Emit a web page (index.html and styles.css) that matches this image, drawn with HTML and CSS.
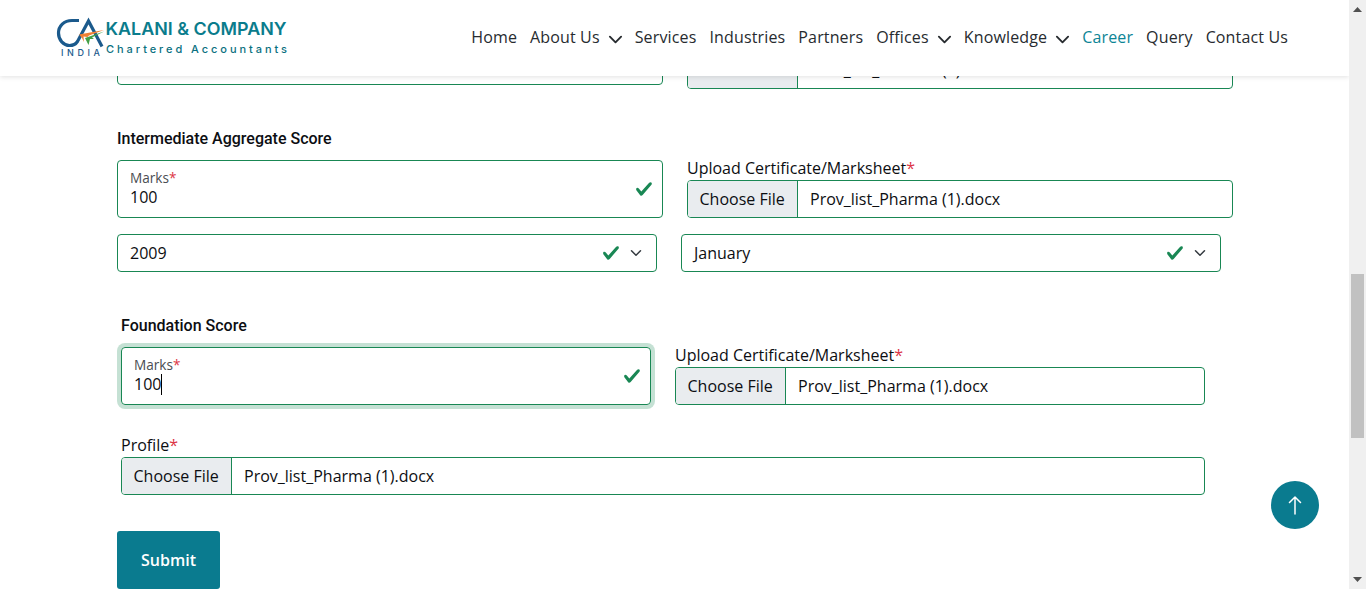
FILE: index.html
```html
<!DOCTYPE html>
<html lang="en">
<head>
<meta charset="utf-8">
<title>Career - Kalani &amp; Company</title>
<link rel="stylesheet" href="styles.css">
</head>
<body>
<svg class="defs" width="0" height="0" aria-hidden="true">
  <symbol id="check" viewBox="0 0 8 8"><path d="M2.3 6.73.6 4.53c-.4-1.04.46-1.4 1.1-.8l1.1 1.4 3.4-3.8c.6-.63 1.6-.27 1.2.7l-4 4.6c-.43.5-.8.4-1.1.1z" fill="#198754"/></symbol>
  <symbol id="caret" viewBox="0 0 16 16"><path d="m2 5 6 6 6-6" fill="none" stroke="currentColor" stroke-width="2" stroke-linecap="round" stroke-linejoin="round"/></symbol>
</svg>
<div class="page">
  <header class="header">
    <a class="logo">
      <svg width="240" height="46" viewBox="0 0 240 46">
        <g fill="none" stroke="#1b5a8c">
          <path d="M24 5.500H17C9 5.500 3.500 11 3.500 18s5 12.500 11 12.500c4 0 6-1 8-4L33.500 6l13.500 25.500" stroke-width="3.200"/>
        </g>
        <path d="M24 19.500 49 15 34 20.500l-1.500 1.500-4-.5.500 5.500-2-4z" fill="#f08034"/>
        <path d="M30 23 49 16.500 37 22.500l2 1.500-4 0-1.500 6z" fill="#43a047"/>
        <text class="logo-india" x="6" y="41" textLength="39">INDIA</text>
        <text class="logo-name" x="50.500" y="20" textLength="181" lengthAdjust="spacingAndGlyphs">KALANI &amp; COMPANY</text>
        <text class="logo-sub" x="51" y="38" textLength="181">Chartered Accountants</text>
      </svg>
    </a>
    <nav class="nav">
      <a>Home</a>
      <a>About Us<svg class="nav-caret"><use href="#caret"/></svg></a>
      <a>Services</a>
      <a>Industries</a>
      <a>Partners</a>
      <a>Offices<svg class="nav-caret"><use href="#caret"/></svg></a>
      <a>Knowledge<svg class="nav-caret"><use href="#caret"/></svg></a>
      <a class="active">Career</a>
      <a>Query</a>
      <a>Contact Us</a>
    </nav>
  </header>
  <main class="form">
    <div class="row previous">
      <div class="field"></div>
      <div class="upload">
        <div class="file"><span class="choose">Choose File</span><span class="name">Prov_list_Pharma (1).docx</span></div>
      </div>
    </div>
    <h2 class="title">Intermediate Aggregate Score</h2>
    <div class="row">
      <div class="field"><div><div class="small">Marks<i>*</i></div><div class="value">100</div></div><svg class="check"><use href="#check"/></svg></div>
      <div class="upload">
        <div class="label">Upload Certificate/Marksheet<i>*</i></div>
        <div class="file"><span class="choose">Choose File</span><span class="name">Prov_list_Pharma (1).docx</span></div>
      </div>
    </div>
    <div class="row selects">
      <div class="select"><span>2009</span><svg class="check"><use href="#check"/></svg><svg class="caret"><use href="#caret"/></svg></div>
      <div class="select"><span>January</span><svg class="check"><use href="#check"/></svg><svg class="caret"><use href="#caret"/></svg></div>
    </div>
    <section class="inner">
      <h2 class="title">Foundation Score</h2>
      <div class="row">
        <div class="field focus"><div><div class="small">Marks<i>*</i></div><div class="value">100<b class="cursor"></b></div></div><svg class="check"><use href="#check"/></svg></div>
        <div class="upload">
          <div class="label">Upload Certificate/Marksheet<i>*</i></div>
          <div class="file"><span class="choose">Choose File</span><span class="name">Prov_list_Pharma (1).docx</span></div>
        </div>
      </div>
      <div class="profile">
        <div class="label">Profile<i>*</i></div>
        <div class="file"><span class="choose">Choose File</span><span class="name">Prov_list_Pharma (1).docx</span></div>
      </div>
    </section>
    <button class="submit">Submit</button>
  </main>
  <a class="to-top"><svg width="14" height="20" viewBox="0 0 14 20"><path d="M7 19V2M1.500 7.500 7 2l5.500 5.500" fill="none" stroke="#fff" stroke-width="1.500" stroke-linecap="round" stroke-linejoin="round"/></svg></a>
</div>
<div class="scrollbar">
  <svg width="9" height="5" viewBox="0 0 9 5"><path d="M0 5 4.500 0 9 5z" fill="#505050"/></svg>
  <div class="thumb"></div>
  <svg width="9" height="5" viewBox="0 0 9 5"><path d="M0 0h9L4.500 5z" fill="#505050"/></svg>
</div>
</body>
</html>
```
FILE: styles.css
```css
* { box-sizing: border-box; }
body { margin: 0; display: flex; width: 1366px; height: 589px; overflow: hidden; background: #fff; color: #0c0e12; font: 16px/24px "Open Sans", "Noto Sans", sans-serif; }
.defs { position: absolute; }
i { font-style: normal; color: #dc3545; }
.page { position: relative; width: 1349px; height: 589px; overflow: hidden; }

.header { position: absolute; top: 0; left: 0; z-index: 2; width: 1349px; height: 76px; padding: 0 61px 0 55px; display: flex; justify-content: space-between; background: #fff; box-shadow: 0 1px 5px rgba(0, 0, 0, .12); }
.logo { height: 46px; margin-top: 15px; }
.logo svg { display: block; }
.logo text { font-family: Inter, sans-serif; }
.logo-name { font-size: 17.500px; font-weight: 600; fill: #0a7c8c; }
.logo-sub { font-size: 11px; font-weight: 500; fill: #0a7080; }
.logo-india { font-size: 9px; font-weight: 500; fill: #1b5a8c; }
.nav { display: flex; gap: 13px; padding-top: 25px; color: #272b2f; letter-spacing: .145px; white-space: nowrap; }
.nav a { display: flex; }
.nav .active { color: #0d8596; }
.nav-caret { width: 15px; height: 15px; margin: 7px -1px 0 8px; }

.form { padding: 27px 116px 0 117px; }
.row { display: grid; grid-template-columns: 1fr 1fr; column-gap: 24px; align-items: end; }
.previous { height: 62px; align-items: start; }
.previous .upload { padding-top: 24px; }
.field { height: 58px; padding: 0 9px 0 12px; border: 1px solid #198754; border-radius: 4px; display: flex; justify-content: space-between; align-items: center; }
.focus { box-shadow: 0 0 0 4px rgba(25, 135, 84, .25); }
.small { font-size: 13.600px; line-height: 18px; color: #4a4d52; margin-top: -3px; }
.value { display: flex; align-items: center; line-height: 20px; }
.cursor { width: 1px; height: 21px; margin-bottom: -1px; background: #000; }
.check { flex: none; width: 18px; height: 18px; }
.title { margin: 38px 0 0; font: 500 16px/24px Roboto, sans-serif; color: #0c0e12; }
.title + .row { margin-top: 5px; }
.label { line-height: 24px; }
.file { display: flex; height: 38px; border: 1px solid #198754; border-radius: 4px; overflow: hidden; line-height: 36px; white-space: nowrap; }
.choose { width: 110px; padding-left: 11.500px; background: #e9ecef; border-right: 1px solid #198754; }
.name { padding-left: 12px; }
.selects { margin-top: 16px; padding-right: 12px; }
.select { display: flex; align-items: center; height: 38px; padding: 0 12px; border: 1px solid #198754; border-radius: 4px; }
.select span { flex: 1; }
.caret { width: 12px; height: 12px; margin-left: 10px; margin-right: 2px; color: #343a40; }
.inner { padding: 4px 28px 0 4px; }
.profile { margin-top: 28px; }
.submit { display: block; width: 103px; height: 58px; margin-top: 36px; padding: 0; border: 0; border-radius: 3px; background: #0a7b8f; color: #fff; font: 600 16px/24px "Open Sans", sans-serif; }
.to-top { position: absolute; left: 1271px; top: 481px; width: 48px; height: 48px; border-radius: 50%; background: #0a7b8f; display: flex; align-items: center; justify-content: center; }

.scrollbar { width: 17px; height: 589px; padding: 7px 0; background: #f0f0f0; display: flex; flex-direction: column; justify-content: space-between; align-items: center; }
.thumb { width: 13px; height: 164px; margin-top: 123px; background: #c1c1c1; }
```
